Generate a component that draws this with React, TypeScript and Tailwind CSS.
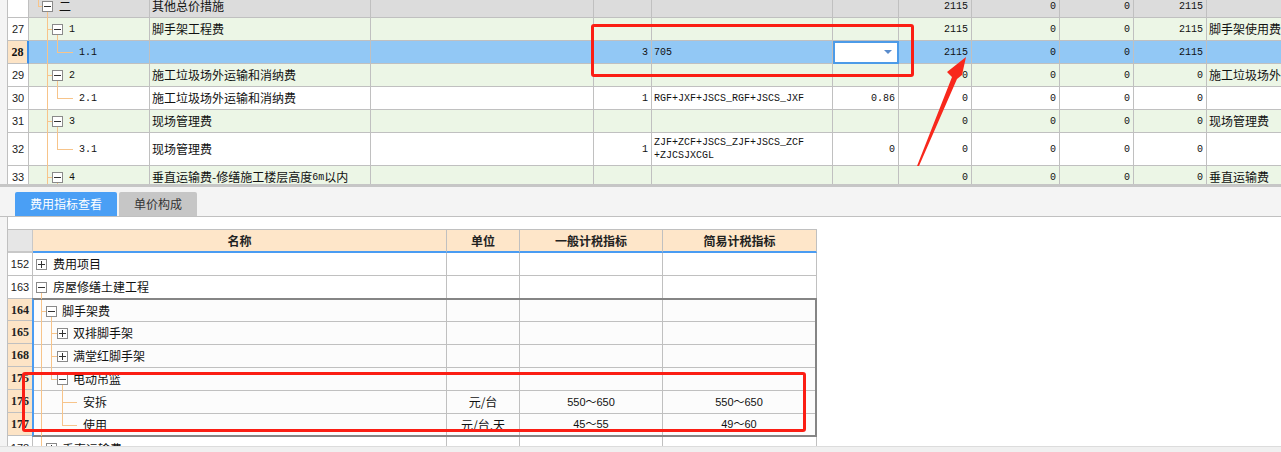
import React from 'react'

type V = { x: number; a: 'full' | 'top' | 'bottom' }
type Tree = { v?: V[]; h?: [number, number]; box?: { x: number; plus?: boolean }; tx: number }

const CJK = "font-['Noto_Sans_CJK_SC',sans-serif] text-[12px]"
const MONO = "font-['Liberation_Mono','Noto_Sans_CJK_SC',monospace] text-[10px]"
const CELL = 'border-r border-b border-[#c0c0c0]'

function TreeBox({ x, y, plus }: { x: number; y: number; plus?: boolean }) {
  return (
    <span className="absolute h-[11px] w-[11px] border border-[#8a8a8a] bg-white" style={{ left: x, top: y }}>
      <span className="absolute left-[1px] top-[4px] h-px w-[7px] bg-[#333]" />
      {plus && <span className="absolute left-[4px] top-[1px] h-[7px] w-px bg-[#333]" />}
    </span>
  )
}

function TreeCell({ t, h, dx = 0, className, children }: { t: Tree; h: number; dx?: number; className?: string; children: React.ReactNode }) {
  const c = Math.round(h / 2)
  return (
    <div className={'relative flex items-center ' + (className ?? '')} style={{ paddingLeft: t.tx + dx }}>
      {t.v?.map((s, i) => (
        <span
          key={i}
          className="absolute w-px bg-[#f7c48a]"
          style={
            s.a === 'full'
              ? { left: s.x + dx, top: 0, bottom: -1 }
              : s.a === 'top'
                ? { left: s.x + dx, top: 0, height: c + 1 }
                : { left: s.x + dx, top: c + 6, bottom: -1 }
          }
        />
      ))}
      {t.h && <span className="absolute h-px bg-[#f7c48a]" style={{ left: t.h[0] + dx, width: t.h[1] - t.h[0], top: c }} />}
      {t.box && <TreeBox x={t.box.x + dx} y={c - 5} plus={t.box.plus} />}
      <span className="relative whitespace-nowrap">{children}</span>
    </div>
  )
}

type TopRow = {
  n: string
  h: number
  bg: 'gray' | 'green' | 'white' | 'sel'
  tree: Tree
  code: string
  name: string
  qty?: string
  formula?: React.ReactNode
  rate?: string
  drop?: boolean
  v: string[]
  note?: string
}

const parent: Tree = { v: [{ x: 18, a: 'full' }, { x: 28, a: 'bottom' }], h: [18, 23], box: { x: 23 }, tx: 40 }
const child: Tree = { v: [{ x: 18, a: 'full' }, { x: 28, a: 'top' }], h: [28, 44], tx: 50 }

const topRows: TopRow[] = [
  {
    n: '',
    h: 23,
    bg: 'gray',
    tree: { v: [{ x: 9, a: 'top' }, { x: 18, a: 'bottom' }], h: [9, 13], box: { x: 13 }, tx: 30 },
    code: '二',
    name: '其他总价措施',
    v: ['2115', '0', '0', '2115'],
  },
  { n: '27', h: 23, bg: 'green', tree: parent, code: '1', name: '脚手架工程费', v: ['2115', '0', '0', '2115'], note: '脚手架使用费' },
  { n: '28', h: 23, bg: 'sel', tree: child, code: '1.1', name: '', qty: '3', formula: '705', drop: true, v: ['2115', '0', '0', '2115'] },
  { n: '29', h: 23, bg: 'green', tree: parent, code: '2', name: '施工垃圾场外运输和消纳费', v: ['0', '0', '0', '0'], note: '施工垃圾场外运输和消纳费' },
  {
    n: '30',
    h: 23,
    bg: 'white',
    tree: child,
    code: '2.1',
    name: '施工垃圾场外运输和消纳费',
    qty: '1',
    formula: 'RGF+JXF+JSCS_RGF+JSCS_JXF',
    rate: '0.86',
    v: ['0', '0', '0', '0'],
  },
  { n: '31', h: 23, bg: 'green', tree: parent, code: '3', name: '现场管理费', v: ['0', '0', '0', '0'], note: '现场管理费' },
  {
    n: '32',
    h: 33,
    bg: 'white',
    tree: child,
    code: '3.1',
    name: '现场管理费',
    qty: '1',
    formula: (
      <>
        ZJF+ZCF+JSCS_ZJF+JSCS_ZCF
        <br />
        +ZJCSJXCGL
      </>
    ),
    rate: '0',
    v: ['0', '0', '0', '0'],
  },
  {
    n: '33',
    h: 23,
    bg: 'green',
    tree: parent,
    code: '4',
    name: '垂直运输费-修缮施工楼层高度6m以内',
    v: ['0', '0', '0', '0'],
    note: '垂直运输费',
  },
]

const rowBg = { gray: 'bg-[#dcdcdc]', green: 'bg-[#ecf6e6]', white: 'bg-white', sel: 'bg-[#92c8f5]' }

function TopTable() {
  return (
    <div className="-mt-[5px] flex-1">
      {topRows.map((r, i) => (
        <div
          key={i}
          className={
            'grid grid-cols-[21px_121px_221px_223px_58px_181px_66px_73px_88px_74px_73px_1fr] ' +
            (r.h === 33 ? 'h-[33px] ' : 'h-[23px] ') +
            rowBg[r.bg]
          }
        >
          <div
            className={
              r.bg === 'sel'
                ? "flex items-center justify-center border-b border-r-2 border-b-[#c0c0c0] border-r-[#3c8ee8] bg-[#fde4c6] font-['Liberation_Serif',serif] text-[12px] font-bold"
                : "flex items-center justify-center border-b border-r border-[#c0c0c0] bg-white font-['Liberation_Sans',sans-serif] text-[11px] text-[#222]"
            }
          >
            {r.n}
          </div>
          <TreeCell t={r.tree} h={r.h - 1} className={CELL + ' ' + MONO}>
            {r.code.match(/[0-9]/) ? r.code : <span className={CJK}>{r.code}</span>}
          </TreeCell>
          <div className={CELL + ' ' + CJK + ' flex items-center whitespace-nowrap pl-[2px]'}>
            {r.name.includes('6m') ? (
              <>
                垂直运输费-修缮施工楼层高度<span className={MONO}>6m</span>以内
              </>
            ) : (
              r.name
            )}
          </div>
          <div className={CELL} />
          <div className={CELL + ' ' + MONO + ' flex items-center justify-end pr-[3px]'}>{r.qty}</div>
          <div className={CELL + ' ' + MONO + ' flex items-center pl-[2px] leading-[13px]'}>
            <span>{r.formula}</span>
          </div>
          {r.drop ? (
            <div className="relative border-2 border-[#4c9be8] bg-white">
              <span className="absolute right-[5px] top-[7px] h-0 w-0 border-x-[4px] border-t-[4px] border-x-transparent border-t-[#5a8ccc]" />
            </div>
          ) : (
            <div className={CELL + ' ' + MONO + ' flex items-center justify-end pr-[3px]'}>{r.rate}</div>
          )}
          {r.v.map((x, j) => (
            <div key={j} className={CELL + ' ' + MONO + ' flex items-center justify-end pr-[3px]'}>
              {x}
            </div>
          ))}
          <div className={'border-b border-[#c0c0c0] ' + CJK + ' flex items-center overflow-hidden whitespace-nowrap pl-[2px]'}>
            {r.note}
          </div>
        </div>
      ))}
    </div>
  )
}

type BotRow = { n: string; t: Tree; name: string; unit?: string; a?: string; b?: string }

const VAL = "font-['Liberation_Sans','Noto_Sans_CJK_SC',sans-serif] text-[11px]"

const groupRows: BotRow[] = [
  { n: '164', t: { v: [{ x: 8, a: 'full' }, { x: 18, a: 'bottom' }], h: [8, 13], box: { x: 13 }, tx: 29 }, name: '脚手架费' },
  { n: '165', t: { v: [{ x: 8, a: 'full' }, { x: 18, a: 'full' }], h: [18, 24], box: { x: 24, plus: true }, tx: 40 }, name: '双排脚手架' },
  { n: '168', t: { v: [{ x: 8, a: 'full' }, { x: 18, a: 'full' }], h: [18, 24], box: { x: 24, plus: true }, tx: 40 }, name: '满堂红脚手架' },
  {
    n: '175',
    t: { v: [{ x: 8, a: 'full' }, { x: 18, a: 'top' }, { x: 29, a: 'bottom' }], h: [18, 24], box: { x: 24 }, tx: 40 },
    name: '电动吊篮',
  },
  { n: '176', t: { v: [{ x: 8, a: 'full' }, { x: 29, a: 'full' }], h: [29, 44], tx: 50 }, name: '安拆', unit: '元/台', a: '550～650', b: '550～650' },
  { n: '177', t: { v: [{ x: 8, a: 'full' }, { x: 29, a: 'top' }], h: [29, 44], tx: 50 }, name: '使用', unit: '元/台.天', a: '45～55', b: '49～60' },
]

function BottomTable() {
  const heights = ['h-[22px]', 'h-[23px]', 'h-[23px]', 'h-[23px]', 'h-[23px]', 'h-[21px]']
  return (
    <div className="w-[809px]">
      <div className="grid h-[24px] grid-cols-[25px_414px_73px_143px_154px] border-t border-[#c0c0c0]">
        <div className="border-b-2 border-r border-[#c8c8c8] bg-[#e6e6e6]" />
        {['名称', '单位', '一般计税指标', '简易计税指标'].map((h) => (
          <div
            key={h}
            className={'flex items-center justify-center border-r border-b-2 border-r-[#c0c0c0] border-b-[#4a9cf2] bg-[#fee6c9] font-bold text-[#222] ' + CJK}
          >
            {h}
          </div>
        ))}
      </div>
      {[
        { n: '152', t: { box: { x: 3, plus: true }, tx: 20 } as Tree, name: '费用项目', last: false },
        { n: '163', t: { v: [{ x: 8, a: 'bottom' }], box: { x: 3 }, tx: 20 } as Tree, name: '房屋修缮土建工程', last: true },
      ].map((r) => (
        <div key={r.n} className={'grid grid-cols-[25px_414px_73px_143px_154px] ' + (r.last ? 'h-[22px]' : 'h-[23px]')}>
          <div className={"flex items-center justify-center border-r border-[#c0c0c0] font-['Liberation_Sans',sans-serif] text-[11px] text-[#222] " + (r.last ? '' : 'border-b')}>
            {r.n}
          </div>
          <TreeCell t={r.t} h={22} className={'border-r border-[#c0c0c0] ' + CJK + (r.last ? '' : ' border-b')}>
            {r.name}
          </TreeCell>
          <div className={'border-r border-[#c0c0c0]' + (r.last ? '' : ' border-b')} />
          <div className={'border-r border-[#c0c0c0]' + (r.last ? '' : ' border-b')} />
          <div className={'border-r border-[#c0c0c0]' + (r.last ? '' : ' border-b')} />
        </div>
      ))}
      <div className="flex">
        <div className="w-[24px] border-t border-[#c0c0c0]">
          {groupRows.map((r, i) => (
            <div
              key={r.n}
              className={
                "flex items-center justify-center border-b border-[#c0c0c0] bg-[#fde4c6] font-['Liberation_Serif',serif] text-[12px] font-bold text-[#222] " +
                (i === 0 ? 'h-[22px]' : 'h-[23px]')
              }
            >
              {r.n}
            </div>
          ))}
        </div>
        <div className="border-2 border-[#858585] border-l-[#4a9cf2] bg-[#fcfcfc]">
          {groupRows.map((r, i) => (
            <div key={r.n} className={'grid grid-cols-[413px_73px_143px_152px] ' + heights[i]}>
              <TreeCell t={r.t} h={22} dx={-1} className={'border-r border-[#c0c0c0] ' + CJK + (i < 5 ? ' border-b' : '')}>
                {r.name}
              </TreeCell>
              <div className={'flex items-center justify-center border-r border-[#c0c0c0] ' + CJK + (i < 5 ? ' border-b' : '')}>
                {r.unit}
              </div>
              <div className={'flex items-center justify-center border-r border-[#c0c0c0] ' + VAL + (i < 5 ? ' border-b' : '')}>{r.a}</div>
              <div className={'flex items-center justify-center border-[#c0c0c0] ' + VAL + (i < 5 ? ' border-b' : '')}>{r.b}</div>
            </div>
          ))}
        </div>
      </div>
      <div className="grid h-[23px] grid-cols-[25px_414px_73px_143px_154px]">
        <div className="flex items-center justify-center border-r border-[#c0c0c0] font-['Liberation_Sans',sans-serif] text-[11px] text-[#222]">
          178
        </div>
        <TreeCell t={{ v: [{ x: 8, a: 'full' }], h: [8, 13], box: { x: 13, plus: true }, tx: 29 }} h={22} className={'border-r border-[#c0c0c0] ' + CJK}>
          垂直运输费
        </TreeCell>
        <div className="border-r border-[#c0c0c0]" />
        <div className="border-r border-[#c0c0c0]" />
        <div className="border-r border-[#c0c0c0]" />
      </div>
    </div>
  )
}

export default function App() {
  return (
    <div className="relative flex h-[452px] w-[1281px] flex-col overflow-hidden bg-white text-[#111]">
      <div className="flex h-[184px] shrink-0 overflow-hidden">
        <div className="w-[8px] shrink-0 border-r border-[#c0c0c0] bg-[#f4f4f4]" />
        <TopTable />
      </div>
      <div className="h-[3px] shrink-0 bg-[#c6c6c6]" />
      <div className="flex h-[30px] shrink-0 items-end gap-[2px] border-b border-[#c0c0c0] bg-[#f4f4f4] pl-[15px]">
        <div className={'flex h-[24px] w-[102px] items-center justify-center rounded-t-[2px] bg-[#4a9ff5] text-white ' + CJK}>费用指标查看</div>
        <div className={'flex h-[24px] w-[78px] items-center justify-center rounded-t-[2px] bg-[#c6c6c6] text-[#333] ' + CJK}>单价构成</div>
      </div>
      <div className="flex flex-1 overflow-hidden">
        <div className="w-[8px] shrink-0 border-r border-[#c0c0c0] bg-[#f4f4f4]" />
        <div className="flex-1 pt-[12px]">
          <BottomTable />
        </div>
      </div>
      <div className="h-[6px] shrink-0 border-t border-[#dcdcdc] bg-[#f0f0f0]" />

      <div className="pointer-events-none absolute left-[591px] top-[24px] h-[53px] w-[323px] rounded-[3px] border-[3px] border-[#fb1e14]" />
      <div className="pointer-events-none absolute left-[22px] top-[372px] h-[60px] w-[784px] rounded-[3px] border-[3px] border-[#fb1e14]" />
      <svg className="pointer-events-none absolute inset-0" width="1281" height="452" viewBox="0 0 1281 452">
        <polygon points="917,166 952,77 947,72 966,57 962,75 957,79 919,166" fill="#f8281c" />
      </svg>
    </div>
  )
}
